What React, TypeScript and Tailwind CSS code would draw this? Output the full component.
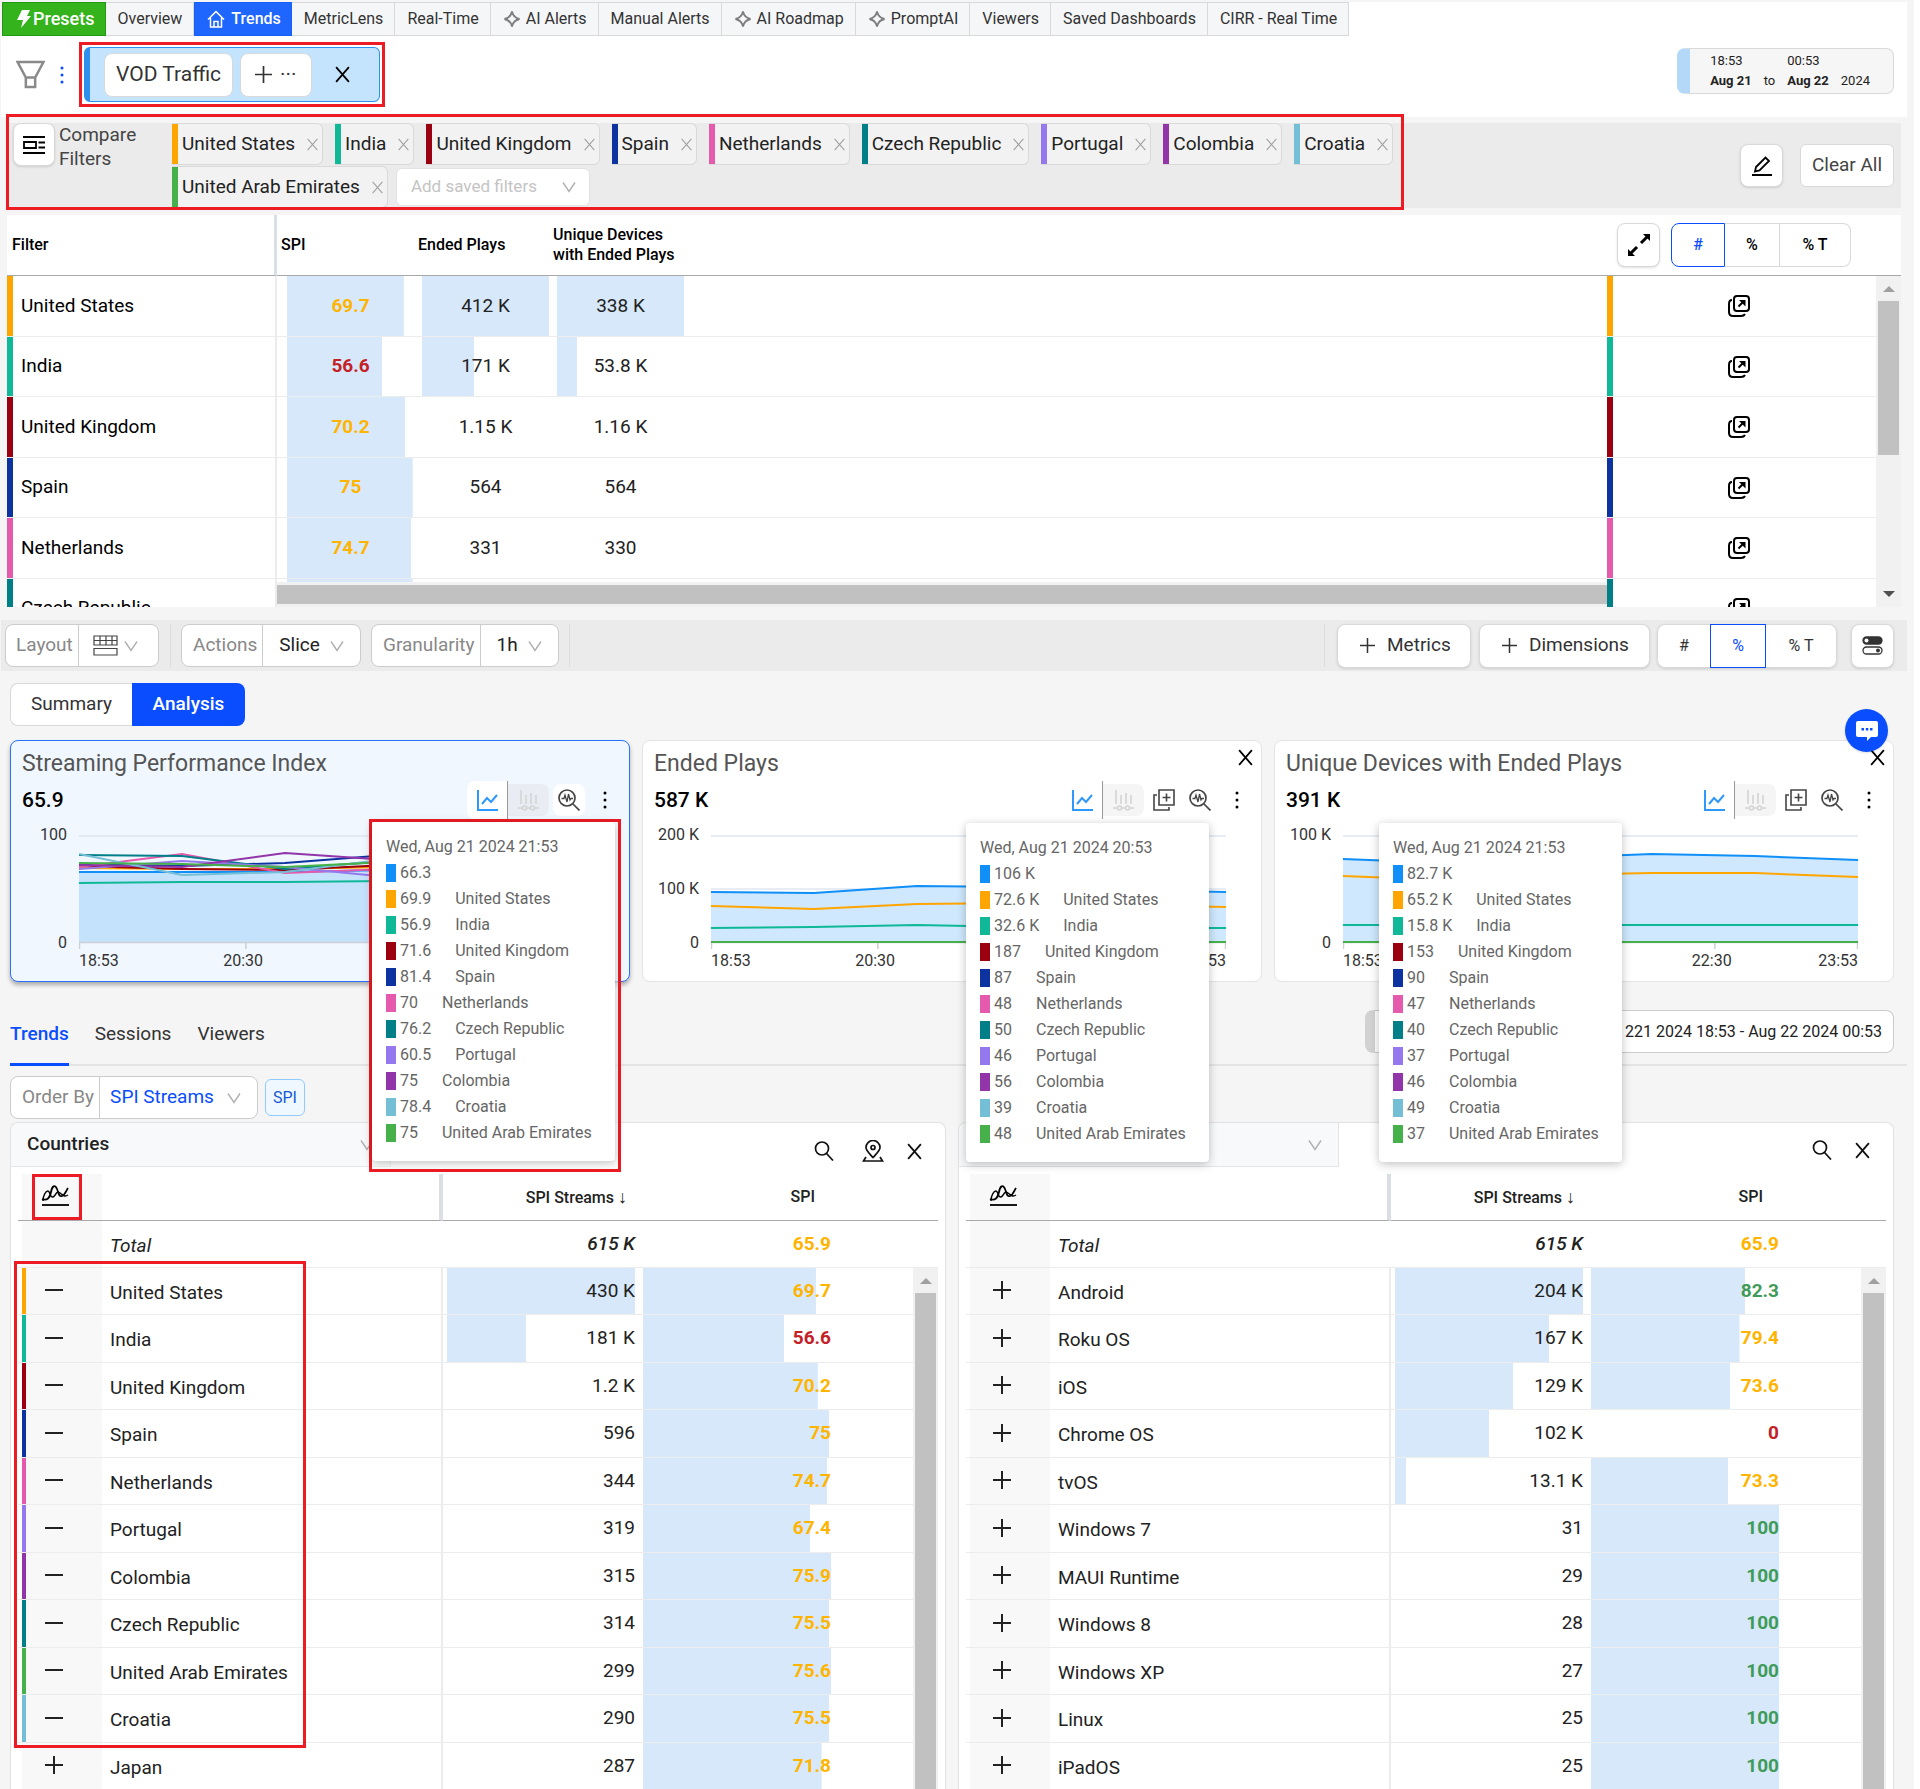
import type { ReactNode } from "react";

// =============================================================================
// Data
// =============================================================================

interface Country {
  name: string;
  bg: string;
}

const US: Country = { name: "United States", bg: "bg-[#ffa500]" };
const IN: Country = { name: "India", bg: "bg-[#0fb998]" };
const UK: Country = { name: "United Kingdom", bg: "bg-[#9a000f]" };
const ES: Country = { name: "Spain", bg: "bg-[#0d33a0]" };
const NL: Country = { name: "Netherlands", bg: "bg-[#e55aac]" };
const CZ: Country = { name: "Czech Republic", bg: "bg-[#007f88]" };
const PT: Country = { name: "Portugal", bg: "bg-[#9678ee]" };
const CO: Country = { name: "Colombia", bg: "bg-[#9135a8]" };
const HR: Country = { name: "Croatia", bg: "bg-[#74bfd6]" };
const AE: Country = { name: "United Arab Emirates", bg: "bg-[#46b04a]" };

const COUNTRIES = [US, IN, UK, ES, NL, CZ, PT, CO, HR, AE];

const YELLOW = "text-[#ffb400]";
const RED = "text-[#c42127]";
const GREEN = "text-[#3f9b57]";

interface CompareRow {
  country: Country;
  cells: { text: string; fill: number }[];
  tone: string;
}

const COMPARE_ROWS: CompareRow[] = [
  { country: US, tone: YELLOW, cells: [{ text: "69.7", fill: 92 }, { text: "412 K", fill: 100 }, { text: "338 K", fill: 100 }] },
  { country: IN, tone: RED, cells: [{ text: "56.6", fill: 75 }, { text: "171 K", fill: 41 }, { text: "53.8 K", fill: 16 }] },
  { country: UK, tone: YELLOW, cells: [{ text: "70.2", fill: 93 }, { text: "1.15 K", fill: 0 }, { text: "1.16 K", fill: 0 }] },
  { country: ES, tone: YELLOW, cells: [{ text: "75", fill: 99 }, { text: "564", fill: 0 }, { text: "564", fill: 0 }] },
  { country: NL, tone: YELLOW, cells: [{ text: "74.7", fill: 98 }, { text: "331", fill: 0 }, { text: "330", fill: 0 }] },
  { country: CZ, tone: YELLOW, cells: [{ text: "", fill: 99 }, { text: "", fill: 0 }, { text: "", fill: 0 }] },
];

interface DimensionRow {
  name: string;
  streams: string;
  spi: string;
  streamsFill: number;
  spiFill: number;
  tone: string;
  bar?: string;
}

const COUNTRY_ROWS: DimensionRow[] = [
  { name: "United States", streams: "430 K", spi: "69.7", streamsFill: 100, spiFill: 92, tone: YELLOW, bar: US.bg },
  { name: "India", streams: "181 K", spi: "56.6", streamsFill: 42, spiFill: 75, tone: RED, bar: IN.bg },
  { name: "United Kingdom", streams: "1.2 K", spi: "70.2", streamsFill: 0, spiFill: 93, tone: YELLOW, bar: UK.bg },
  { name: "Spain", streams: "596", spi: "75", streamsFill: 0, spiFill: 99, tone: YELLOW, bar: ES.bg },
  { name: "Netherlands", streams: "344", spi: "74.7", streamsFill: 0, spiFill: 98, tone: YELLOW, bar: NL.bg },
  { name: "Portugal", streams: "319", spi: "67.4", streamsFill: 0, spiFill: 89, tone: YELLOW, bar: PT.bg },
  { name: "Colombia", streams: "315", spi: "75.9", streamsFill: 0, spiFill: 100, tone: YELLOW, bar: CO.bg },
  { name: "Czech Republic", streams: "314", spi: "75.5", streamsFill: 0, spiFill: 99, tone: YELLOW, bar: CZ.bg },
  { name: "United Arab Emirates", streams: "299", spi: "75.6", streamsFill: 0, spiFill: 100, tone: YELLOW, bar: AE.bg },
  { name: "Croatia", streams: "290", spi: "75.5", streamsFill: 0, spiFill: 99, tone: YELLOW, bar: HR.bg },
  { name: "Japan", streams: "287", spi: "71.8", streamsFill: 0, spiFill: 95, tone: YELLOW },
];

const OS_ROWS: DimensionRow[] = [
  { name: "Android", streams: "204 K", spi: "82.3", streamsFill: 100, spiFill: 82, tone: GREEN },
  { name: "Roku OS", streams: "167 K", spi: "79.4", streamsFill: 82, spiFill: 79, tone: YELLOW },
  { name: "iOS", streams: "129 K", spi: "73.6", streamsFill: 63, spiFill: 74, tone: YELLOW },
  { name: "Chrome OS", streams: "102 K", spi: "0", streamsFill: 50, spiFill: 0, tone: RED },
  { name: "tvOS", streams: "13.1 K", spi: "73.3", streamsFill: 6, spiFill: 73, tone: YELLOW },
  { name: "Windows 7", streams: "31", spi: "100", streamsFill: 0, spiFill: 100, tone: GREEN },
  { name: "MAUI Runtime", streams: "29", spi: "100", streamsFill: 0, spiFill: 100, tone: GREEN },
  { name: "Windows 8", streams: "28", spi: "100", streamsFill: 0, spiFill: 100, tone: GREEN },
  { name: "Windows XP", streams: "27", spi: "100", streamsFill: 0, spiFill: 100, tone: GREEN },
  { name: "Linux", streams: "25", spi: "100", streamsFill: 0, spiFill: 100, tone: GREEN },
  { name: "iPadOS", streams: "25", spi: "100", streamsFill: 0, spiFill: 100, tone: GREEN },
];

// Six hourly samples per series, drawn on a 500 x 106 plot
interface Series {
  color: string;
  ys: number[];
}

const SPI_SERIES: Series[] = [
  { color: "#0f8ff7", ys: [36, 36, 36, 34, 35, 36] },
  { color: "#ffa500", ys: [32, 33, 33, 31, 32, 32] },
  { color: "#0fb998", ys: [47, 46, 46, 45, 46, 46] },
  { color: "#9a000f", ys: [30, 33, 34, 29, 31, 32] },
  { color: "#0d33a0", ys: [28, 30, 27, 19, 24, 26] },
  { color: "#e55aac", ys: [31, 18, 37, 33, 30, 31] },
  { color: "#007f88", ys: [19, 20, 33, 25, 28, 27] },
  { color: "#9678ee", ys: [33, 25, 31, 41, 36, 33] },
  { color: "#9135a8", ys: [29, 31, 17, 24, 26, 28] },
  { color: "#74bfd6", ys: [18, 39, 36, 23, 27, 28] },
  { color: "#46b04a", ys: [27, 28, 31, 26, 28, 29] },
];

const PLAYS_SERIES: Series[] = [
  { color: "#0f8ff7", ys: [56, 57, 50, 51, 54, 56] },
  { color: "#ffa500", ys: [70, 73, 68, 67, 69, 71] },
  { color: "#0fb998", ys: [92, 91, 89, 91, 92, 92] },
  { color: "#46b04a", ys: [106, 106, 106, 106, 106, 106] },
];

const DEVICES_SERIES: Series[] = [
  { color: "#0f8ff7", ys: [23, 27, 22, 18, 20, 24] },
  { color: "#ffa500", ys: [40, 44, 39, 37, 37, 41] },
  { color: "#0fb998", ys: [89, 89, 89, 89, 89, 89] },
  { color: "#46b04a", ys: [106, 106, 106, 106, 106, 106] },
];

// =============================================================================
// Icons
// =============================================================================

function Svg({ size, box = "0 0 24 24", width = 2, className = "", children }: { size: number; box?: string; width?: number; className?: string; children: ReactNode }) {
  return (
    <svg width={size} height={size} viewBox={box} fill="none" stroke="currentColor" strokeWidth={width} className={`shrink-0 ${className}`} aria-hidden="true">
      {children}
    </svg>
  );
}

const BoltIcon = () => (
  <svg width="14" height="18" viewBox="0 0 14 18" fill="currentColor" className="shrink-0" aria-hidden="true">
    <path d="M5 0h8l-3 6h4L4 18l2-8H0z" />
  </svg>
);

const HomeIcon = () => (
  <Svg size={18} width={1.5} box="0 0 18 18">
    <path d="M1 9.5 9 1.5l8 8M3.5 8v9h11V8M7 17v-5.5h4V17" />
  </Svg>
);

const SparkleIcon = () => (
  <Svg size={18} width={1.8} box="0 0 18 18" className="text-[#7d7d7d]">
    <path d="M9 1.500c1 4.500 3 6.500 7.500 7.500-4.500 1-6.500 3-7.500 7.500-1-4.500-3-6.500-7.500-7.500 4.500-1 6.500-3 7.500-7.500z" />
  </Svg>
);

const CloseIcon = ({ size, width = 2 }: { size: number; width?: number }) => (
  <Svg size={size} width={width} box="0 0 16 16">
    <path d="M2 1l12 14M14 1 2 15" />
  </Svg>
);

const Chevron = ({ className = "" }: { className?: string }) => (
  <Svg size={14} width={1.4} box="0 0 14 14" className={`text-[#b0b0b0] ${className}`}>
    <path d="m1 2.500 6 9 6-9" />
  </Svg>
);

const PlusIcon = ({ size = 18, width = 2 }: { size?: number; width?: number }) => (
  <Svg size={size} width={width} box="0 0 18 18">
    <path d="M9 0v18M0 9h18" />
  </Svg>
);

const MinusIcon = () => (
  <Svg size={18} width={2} box="0 0 18 18">
    <path d="M0 9h18" />
  </Svg>
);

const FunnelIcon = () => (
  <Svg size={29} width={2.4} box="0 0 28 28" className="text-[#8a8a8a]">
    <path d="M1.500 2h25L18.500 17h-9zM9.500 17h9v9h-9z" />
  </Svg>
);

const ListIcon = () => (
  <Svg size={22} width={1.8} box="0 0 22 22">
    <path d="M0 3h22M0 19h22M1 8h12v6H1zM15.500 8.500H22M15.500 13.500H22" />
  </Svg>
);

const PencilIcon = () => (
  <Svg size={20} width={1.8} box="0 0 20 20">
    <path d="m4 11 9.500-9.500 3.500 3.500-9.500 9.500-4.500 1zM0 19h20" />
  </Svg>
);

const ExpandIcon = () => (
  <Svg size={22} width={3} box="0 0 22 22">
    <path d="m13 9 6-6M9 13l-6 6" />
    <path d="M15 0h7v7zM7 22H0v-7z" fill="currentColor" stroke="none" />
  </Svg>
);

const OpenIcon = () => (
  <Svg size={22} width={2} box="0 0 22 22">
    <rect x="6" y="1" width="15" height="15" rx="3" />
    <path d="M4 5Q1 5 1 9v8q0 4 4 4h8q3 0 4-2" />
    <path d="m10.500 11.500 5-5" />
    <path d="M11 5h6.500v6.500z" fill="currentColor" stroke="none" />
  </Svg>
);

const LayoutIcon = () => (
  <svg width="25" height="21" viewBox="0 0 25 21" fill="none" stroke="#444" strokeWidth="1.200" className="shrink-0" aria-hidden="true">
    <path d="M1 1h23v9H1zM1 5.500h23M7 1v9M13 1v9M19 1v9M1 13.500h23v6.500H1z" />
  </svg>
);

const TogglesIcon = () => (
  <svg width="21" height="19" viewBox="0 0 21 19" fill="none" stroke="#333" strokeWidth="1.300" className="shrink-0" aria-hidden="true">
    <rect x="1" y="1" width="19" height="7" rx="3.500" fill="#333" />
    <circle cx="4.500" cy="4.500" r="2" fill="#fff" stroke="none" />
    <rect x="1" y="11" width="19" height="7" rx="3.500" />
    <circle cx="16" cy="14.500" r="2" fill="#333" stroke="none" />
  </svg>
);

const LineChartIcon = () => (
  <Svg size={21} width={2} box="0 0 21 21" className="text-[#2f98fb]">
    <path d="M1 0v20h20M5 14l5-6 4 4 6-7" />
  </Svg>
);

const BarChartIcon = () => (
  <Svg size={21} width={1.6} box="0 0 21 21" className="text-[#d4d4d4]">
    <path d="M3 0v14M8 5v9M13 3v11M18 5v9M0 18h5M16 18h5M8 18h5" />
    <circle cx="6.500" cy="18" r="2" />
    <circle cx="14.500" cy="18" r="2" />
  </Svg>
);

const CopyPlusIcon = () => (
  <Svg size={22} width={1.6} box="0 0 22 22">
    <path d="M6 1h15v15H6zM4 6H1v15h15v-3M13.500 4.500v8M9.500 8.500h8" />
  </Svg>
);

const PulseSearchIcon = () => (
  <Svg size={22} width={1.7} box="0 0 22 22">
    <circle cx="9" cy="9" r="8" />
    <path d="m15 15 6.500 6.500" />
    <path d="M3.500 9.500H6L7 6l2 7 1.500-8 1.500 6 1-1.500h2" strokeWidth="1.300" />
  </Svg>
);

const DotsIcon = () => (
  <svg width="4" height="20" viewBox="0 0 4 20" fill="currentColor" className="shrink-0" aria-hidden="true">
    <circle cx="2" cy="3" r="1.500" />
    <circle cx="2" cy="10" r="1.500" />
    <circle cx="2" cy="17" r="1.500" />
  </svg>
);

const SearchIcon = () => (
  <Svg size={20} width={1.7} box="0 0 20 20">
    <circle cx="8" cy="7.500" r="6.500" />
    <path d="m12.500 12.500 6.500 7" />
  </Svg>
);

const MapPinIcon = () => (
  <Svg size={22} width={1.7} box="0 0 22 22">
    <path d="M11 17.500C7 13 4 10.500 4 7.500a7 7 0 0 1 14 0c0 3-3 5.500-7 10zM4 17l-2.500 4h19L18 17" />
    <circle cx="11" cy="7.500" r="2" />
  </Svg>
);

const TrendIcon = () => (
  <svg width="28" height="22" viewBox="0 0 28 22" fill="none" stroke="currentColor" strokeWidth="1.800" className="shrink-0" aria-hidden="true">
    <path d="M1 15c5 2 8-1 9-7s4-8 6-3 2 8 5 7 4-5 6-8" />
    <path d="M2 17c0-6 3-10 5-10s2 7 5 6 3-7 7-4 5 4 8 2" strokeWidth="1.500" />
    <path d="M1 21h27" />
  </svg>
);

// =============================================================================
// Top navigation
// =============================================================================

function TopTabs() {
  const tab = "flex items-center gap-[5px] border-y border-r border-[#d9d9d9] bg-[#f5f6f8] pl-3 pr-[11px] text-[#333]";
  return (
    <nav className="flex h-[34px] pl-px text-base">
      <a href="#presets" className="flex items-center gap-0.5 border border-[#1f9a15] bg-[#35b31c] pl-3.5 pr-2.5 text-lg font-medium text-white">
        <BoltIcon />
        Presets
      </a>
      <a href="#overview" className={tab}>Overview</a>
      <a href="#trends" className="flex items-center gap-1.5 border border-[#1560f5] bg-[#1f66ff] pl-3 pr-2.5 font-medium text-white">
        <HomeIcon />
        Trends
      </a>
      <a href="#metriclens" className={tab}>MetricLens</a>
      <a href="#realtime" className={tab}>Real-Time</a>
      <a href="#ai-alerts" className={tab}><SparkleIcon />AI Alerts</a>
      <a href="#manual-alerts" className={tab}>Manual Alerts</a>
      <a href="#ai-roadmap" className={tab}><SparkleIcon />AI Roadmap</a>
      <a href="#prompt-ai" className={tab}><SparkleIcon />PromptAI</a>
      <a href="#viewers" className={tab}>Viewers</a>
      <a href="#saved" className={tab}>Saved Dashboards</a>
      <a href="#cirr" className={tab}>CIRR - Real Time</a>
    </nav>
  );
}

function FilterBar() {
  return (
    <div className="flex items-start justify-between pb-2.5 pl-[15px] pr-[13px] pt-1.5">
      <div className="flex items-center">
        <button aria-label="Filters"><FunnelIcon /></button>
        <button aria-label="Filter options" className="mx-[15px] text-[#0a4dff]"><DotsIcon /></button>
        <div className="border-[3px] border-[#ed1c24] p-0.5">
          <div className="flex h-[55px] items-center rounded-md border border-l-[6px] border-[#2f8fee] bg-[#c4e3fd] pl-3.5">
            <button className="h-11 rounded-lg border border-[#d9d9d9] bg-white px-[11px] text-[21px] text-[#333]">VOD Traffic</button>
            <button aria-label="Add filter" className="ml-[7px] flex h-11 items-center gap-2 rounded-lg border border-[#d9d9d9] bg-white px-3.5 text-[21px] text-[#333]">
              <PlusIcon size={17} width={1.8} />
              <span>···</span>
            </button>
            <button aria-label="Remove VOD Traffic" className="pl-[22px] pr-7"><CloseIcon size={17} width={1.7} /></button>
          </div>
        </div>
      </div>
      <button className="mt-1.5 flex h-[46px] items-center rounded-lg border border-l-[13px] border-[#d9d9d9] border-l-[#b3d8f8] bg-[#f6f6f6] pl-5 pr-[23px] text-left text-[13px] leading-5 text-[#222]">
        <span className="mr-3">18:53<br /><b>Aug 21</b></span>
        <span className="mr-3"><br />to</span>
        <span className="mr-3">00:53<br /><b>Aug 22</b></span>
        <span><br />2024</span>
      </button>
    </div>
  );
}

function CompareFilters() {
  return (
    <section className="relative ml-1.5 mr-[13px] mt-1.5 flex items-start bg-[#ebebeb] text-[19px]">
      <button aria-label="Compare" className="ml-[7px] flex h-[43px] w-[42px] shrink-0 items-center justify-center rounded-lg border border-[#d9d9d9] bg-white shadow-sm"><ListIcon /></button>
      <p className="ml-1 w-[110px] shrink-0 leading-6 text-[#444]">Compare Filters</p>
      <div className="flex max-w-[1230px] flex-1 flex-wrap gap-x-3 gap-y-px pl-[3px]">
        {COUNTRIES.map((c) => (
          <span key={c.name} className="flex h-[42px] items-stretch overflow-hidden rounded-r-md border border-l-0 border-[#d9d9d9] bg-[#f2f2f2] text-[#222]">
            <span className={`w-1.5 ${c.bg}`} />
            <span className="flex items-center pl-1">{c.name}</span>
            <button aria-label={`Remove ${c.name}`} className="ml-[11px] mr-[3px] text-[#a0a0a0]"><CloseIcon size={13} width={1.3} /></button>
          </span>
        ))}
        <label className="relative -ml-1 mt-0.5 block">
          <select aria-label="Add saved filters" className="h-[38px] w-[194px] appearance-none rounded-md border border-[#e2e2e2] bg-white px-3.5 text-[17px] text-[#c4c4c4]">
            <option>Add saved filters</option>
          </select>
          <Chevron className="pointer-events-none absolute right-3.5 top-3" />
        </label>
      </div>
      <div className="ml-auto mr-[7px] mt-[21px] flex items-center gap-[17px]">
        <button aria-label="Edit" className="flex h-[43px] w-[43px] items-center justify-center rounded-lg border border-[#d9d9d9] bg-white shadow-sm"><PencilIcon /></button>
        <button className="h-[43px] w-[94px] rounded-md border border-[#d9d9d9] bg-white text-[#444]">Clear All</button>
      </div>
      <div className="pointer-events-none absolute -top-[9px] left-0 -bottom-[2px] w-[1398px] border-[3px] border-[#ed1c24]" />
    </section>
  );
}

// =============================================================================
// Compare table
// =============================================================================

function CompareTable() {
  const seg = "h-11 border-y border-r border-[#d9d9d9] bg-white text-center font-medium";
  return (
    <section className="relative ml-[7px] mr-[13px] mt-[7px] h-[392px] overflow-hidden bg-white">
      <table className="w-full table-fixed border-separate border-spacing-0 text-black">
        <colgroup>
          <col className="w-[270px]" />
          <col className="w-[141px]" />
          <col className="w-[135px]" />
          <col className="w-[135px]" />
          <col />
          <col className="w-[294px]" />
        </colgroup>
        <thead>
          <tr className="text-left text-base leading-5 [&>th]:h-[61px] [&>th]:border-b [&>th]:border-[#a9a9a9] [&>th]:font-medium">
            <th className="border-r-[3px] !border-r-[#d9dfe5] pl-[5px]">Filter</th>
            <th className="pl-1">SPI</th>
            <th>Ended Plays</th>
            <th className="whitespace-nowrap">Unique Devices<br />with Ended Plays</th>
            <th />
            <th>
              <div className="flex items-center pl-2.5">
                <button aria-label="Expand" className="mr-[11px] flex h-11 w-[43px] items-center justify-center rounded-lg border border-[#d9d9d9] bg-white shadow-sm"><ExpandIcon /></button>
                <button className="h-11 w-[54px] rounded-l-lg border border-[#0a4dff] text-center font-medium text-[#0a4dff]">#</button>
                <button className={`${seg} w-[55px]`}>%</button>
                <button className={`${seg} w-[71px] rounded-r-lg`}>% T</button>
              </div>
            </th>
          </tr>
        </thead>
        <tbody className="text-[19px]">
          {COMPARE_ROWS.map((row) => (
            <tr key={row.country.name} className="group [&>td]:border-b [&>td]:border-[#ececec]">
              <td className="border-r-2 p-0">
                <div className="flex h-[60px] items-center gap-2 group-even:h-[59px]">
                  <span className={`h-full w-1.5 ${row.country.bg}`} />
                  {row.country.name}
                </div>
              </td>
              {row.cells.map((cell, i) => (
                <td
                  key={i}
                  className={`bg-[linear-gradient(#d6e8fa,#d6e8fa)] bg-origin-content bg-no-repeat py-0 pr-1 text-center ${i === 0 ? `pl-2.5 font-bold ${row.tone}` : "pl-1 text-[#222]"}`}
                  style={{ backgroundSize: `${cell.fill}% 100%` }}
                >
                  {cell.text}
                </td>
              ))}
              <td />
              <td className="p-0">
                <div className="flex h-[60px] items-center pr-[37px] group-even:h-[59px]">
                  <span className={`h-full w-1.5 ${row.country.bg}`} />
                  <button aria-label={`Open ${row.country.name}`} className="mx-auto"><OpenIcon /></button>
                </div>
              </td>
            </tr>
          ))}
        </tbody>
      </table>
      {/* Scrollbars */}
      <div className="absolute bottom-0 left-[270px] right-[294px] h-[25px] border-y-[3px] border-[#f1f1f1] bg-[#c1c1c1]" />
      <div className="absolute bottom-0 right-0 top-[61px] flex w-[25px] flex-col items-center bg-[#f1f1f1]">
        <span className="mt-2.5 border-x-[6px] border-b-[6px] border-x-transparent border-b-[#a0a0a0]" />
        <span className="mt-[9px] h-[154px] w-[21px] bg-[#c1c1c1]" />
        <span className="mb-2.5 mt-auto border-x-[6px] border-t-[6px] border-x-transparent border-t-[#505050]" />
      </div>
    </section>
  );
}

// =============================================================================
// Toolbar
// =============================================================================

function LabeledSelect({ label, value, className, valueClass = "" }: { label: string; value: string; className: string; valueClass?: string }) {
  return (
    <label className={`flex h-[43px] items-stretch rounded-lg border border-[#ccc] bg-white text-[19px] ${className}`}>
      <span className="flex shrink-0 items-center whitespace-nowrap border-r border-[#ccc] pl-[11px] pr-[5px] text-[#888]">{label}</span>
      <span className="relative flex flex-1 items-center">
        <select className={`w-full appearance-none bg-transparent ${valueClass}`}>
          <option>{value}</option>
        </select>
        <Chevron className="pointer-events-none absolute right-4" />
      </span>
    </label>
  );
}

function Toolbar() {
  const button = "flex h-11 items-center rounded-lg border border-[#d9d9d9] bg-white shadow-sm";
  return (
    <section className="ml-px mr-[7px] mt-[13px] flex h-[51px] items-center bg-[#ebebeb] pl-1 pr-[13px] text-[19px] text-[#333]">
      <div className="flex h-[43px] w-[154px] items-stretch rounded-lg border border-[#ccc] bg-white">
        <span className="flex items-center border-r border-[#ccc] pl-2.5 pr-[5px] text-[#888]">Layout</span>
        <button aria-label="Choose layout" className="flex flex-1 items-center gap-1.5 pl-3.5"><LayoutIcon /><Chevron /></button>
      </div>
      <span className="ml-[11px] mr-2.5 h-[43px] w-px bg-[#ddd]" />
      <LabeledSelect label="Actions" value="Slice" className="mr-2.5 w-[180px]" valueClass="pl-4 text-[#222]" />
      <LabeledSelect label="Granularity" value="1h" className="w-[188px]" valueClass="pl-4 text-[#222]" />
      <span className="ml-2.5 h-[43px] w-px bg-[#ddd]" />
      <span className="ml-auto mr-3 h-[43px] w-px bg-[#ddd]" />
      <button className={`${button} w-[134px] gap-3 pl-[22px]`}><PlusIcon size={15} width={1.8} />Metrics</button>
      <button className={`${button} ml-2 w-[171px] gap-3 pl-[22px]`}><PlusIcon size={15} width={1.8} />Dimensions</button>
      <div className="ml-[7px] flex rounded-lg text-base shadow-sm">
        <button className="h-11 w-[53px] rounded-l-lg border border-r-0 border-[#d9d9d9] bg-white">#</button>
        <button className="h-11 w-14 border border-[#0a4dff] bg-white text-[#0a4dff]">%</button>
        <button className="h-11 w-[71px] rounded-r-lg border border-l-0 border-[#d9d9d9] bg-white">% T</button>
      </div>
      <button aria-label="Toggles" className={`${button} ml-3.5 w-[43px] justify-center`}><TogglesIcon /></button>
    </section>
  );
}

// =============================================================================
// Metric cards
// =============================================================================

interface TooltipProps {
  time: string;
  values: string[];
  className: string;
}

function ChartTooltip({ time, values, className }: TooltipProps) {
  return (
    <div className={`absolute z-10 w-[243px] rounded bg-white px-3.5 pb-[15px] pt-3 text-base leading-[26px] text-[#666] shadow-[0_2px_10px_rgba(0,0,0,0.25)] ${className}`}>
      <p className="whitespace-nowrap">{time}</p>
      <ul>
        {values.map((value, i) => (
          <li key={i} className="flex items-center whitespace-nowrap">
            <span className={`mr-1 h-[18px] w-2.5 ${i === 0 ? "bg-[#0f8ff7]" : COUNTRIES[i - 1].bg}`} />
            {value}
            {i > 0 && <span className="ml-6">{COUNTRIES[i - 1].name}</span>}
          </li>
        ))}
      </ul>
    </div>
  );
}

function Plot({ series, fill, middle }: { series: Series[]; fill: string; middle: boolean }) {
  const points = (ys: number[]) => ys.map((y, i) => `${i * 100},${y + 1}`).join(" ");
  return (
    <svg viewBox="0 0 500 116" preserveAspectRatio="none" className="block h-[116px] w-full" aria-hidden="true">
      <path d={middle ? "M0 1H500M0 54H500" : "M0 1H500"} stroke="#dfe6f2" strokeWidth="1.500" vectorEffect="non-scaling-stroke" />
      <polygon points={`0,107 ${points(series[0].ys)} 500,107`} fill={fill} />
      <path d="M0 107.500H500M.5 107v7M162 107v7M361 107v7M499.500 107v7" stroke="#ccd0d6" strokeWidth="1.500" fill="none" vectorEffect="non-scaling-stroke" />
      {series.map((s) => (
        <polyline key={s.color} points={points(s.ys)} fill="none" stroke={s.color} strokeWidth="2" vectorEffect="non-scaling-stroke" />
      ))}
    </svg>
  );
}

interface MetricCardProps {
  title: string;
  value: string;
  yLabels: string[];
  series: Series[];
  selected?: boolean;
  children: ReactNode;
}

function MetricCard({ title, value, yLabels, series, selected = false, children }: MetricCardProps) {
  return (
    <article className={`relative h-[242px] rounded-lg border ${selected ? "border-[#2871ff] bg-[#f0f7ff] shadow-[0_3px_4px_rgba(0,0,0,0.3)]" : "border-[#e4e4e4] bg-white"}`}>
      <div className="flex items-center justify-between pl-[11px] pr-[7px]">
        <h2 className="pt-1.5 text-[23px] leading-[34px] text-[#555]">{title}</h2>
        {!selected && <button aria-label={`Close ${title}`} className="-mt-2"><CloseIcon size={17} width={1.7} /></button>}
      </div>
      <div className="flex items-center justify-between pl-[11px] pr-[22px]">
        <span className="pt-0.5 text-[21px] font-medium text-black">{value}</span>
        <div className="flex items-center text-[#444]">
          <button aria-label="Line chart" className={`flex h-[38px] w-[41px] items-center justify-center rounded-l-lg border-r border-[#999] ${selected ? "bg-white" : ""}`}><LineChartIcon /></button>
          <button aria-label="Bar chart" className={`flex h-8 w-[41px] items-center justify-center rounded-r-lg ${selected ? "bg-[#e9edf3]" : "bg-[#f5f5f5]"}`}><BarChartIcon /></button>
          {!selected && <button aria-label="Duplicate" className="pl-[9px]"><CopyPlusIcon /></button>}
          <button aria-label="Inspect" className={`flex h-8 items-center rounded-lg ${selected ? "ml-1 bg-white px-[5px]" : "ml-3.5"}`}><PulseSearchIcon /></button>
          <button aria-label="More" className={selected ? "ml-[18px] text-black" : "ml-6 text-black"}><DotsIcon /></button>
        </div>
      </div>
      <div className="mt-4 flex pr-[35px]">
        <div className="flex h-[108px] w-[68px] shrink-0 flex-col justify-between pr-3 text-right text-base text-[#333]">
          {yLabels.map((label) => (
            <span key={label} className="-my-2 leading-4">{label}</span>
          ))}
        </div>
        <div className="flex-1">
          <Plot series={series} fill={selected ? "#c5e2fd" : "#cfe8fd"} middle={yLabels.length === 3} />
          <div className="flex text-base leading-5 text-[#333]">
            <span className="w-[28%]">18:53</span>
            <span>20:30</span>
            <span className="ml-[32%] flex-1">22:30</span>
            <span>23:53</span>
          </div>
        </div>
      </div>
      {children}
    </article>
  );
}

function MetricCards() {
  return (
    <section className="relative ml-2.5 mr-5 mt-3.5 grid grid-cols-3 gap-3">
      <MetricCard selected title="Streaming Performance Index" value="65.9" yLabels={["100", "0"]} series={SPI_SERIES}>
        <div className="absolute left-[358px] top-[78px] z-10 h-[353px] w-[252px] border-[3px] border-[#ed1c24] bg-white/60">
          <ChartTooltip
            time="Wed, Aug 21 2024 21:53"
            values={["66.3", "69.9", "56.9", "71.6", "81.4", "70", "76.2", "60.5", "75", "78.4", "75"]}
            className="left-0 top-0"
          />
        </div>
      </MetricCard>
      <MetricCard title="Ended Plays" value="587 K" yLabels={["200 K", "100 K", "0"]} series={PLAYS_SERIES}>
        <ChartTooltip
          time="Wed, Aug 21 2024 20:53"
          values={["106 K", "72.6 K", "32.6 K", "187", "87", "48", "50", "46", "56", "39", "48"]}
          className="left-[323px] top-[82px]"
        />
      </MetricCard>
      <MetricCard title="Unique Devices with Ended Plays" value="391 K" yLabels={["100 K", "0"]} series={DEVICES_SERIES}>
        <ChartTooltip
          time="Wed, Aug 21 2024 21:53"
          values={["82.7 K", "65.2 K", "15.8 K", "153", "90", "47", "40", "37", "46", "49", "37"]}
          className="left-[104px] top-[82px]"
        />
      </MetricCard>
      <button aria-label="Chat" className="absolute -top-[31px] right-[6px] z-20 flex h-[43px] w-[43px] items-center justify-center rounded-full bg-[#0a4dff] shadow">
        <svg width="22" height="20" viewBox="0 0 22 20" fill="white" aria-hidden="true">
          <path d="M2 0h18q2 0 2 2v12q0 2-2 2h-5l-4 4v-4H2q-2 0-2-2V2q0-2 2-2z" />
          <path d="M5.500 7h2.500v2.500H5.500zM9.800 7h2.500v2.500H9.800zM14 7h2.500v2.500H14z" fill="#0a4dff" />
        </svg>
      </button>
    </section>
  );
}

// =============================================================================
// Dimension panels
// =============================================================================

function DimensionPanel({ title, rows, highlighted = false }: { title: string; rows: DimensionRow[]; highlighted?: boolean }) {
  return (
    <section className="rounded-t-lg border border-b-0 border-[#e2e2e2] bg-white">
      <div className="flex h-[51px] items-start justify-between">
        <label className="relative flex h-11 w-[380px] items-center rounded-tl-lg border-b border-r border-[#e2e4e8] bg-[#f8f9fb]">
          <select aria-label="Dimension" className="w-full appearance-none bg-transparent pl-4 text-[19px] font-medium text-[#222]">
            <option>{title}</option>
          </select>
          <Chevron className="pointer-events-none absolute right-4" />
        </label>
        <div className="flex items-center gap-[22px] pr-[22px] pt-[17px] text-[#111]">
          <button aria-label="Search"><SearchIcon /></button>
          {highlighted && <button aria-label="Map" className="ml-1.5"><MapPinIcon /></button>}
          <button aria-label="Close panel"><CloseIcon size={17} width={1.7} /></button>
        </div>
      </div>
      <div className="relative mx-[7px]">
        <table className="w-full table-fixed border-separate border-spacing-0 text-[#222]">
          <colgroup>
            <col className="w-[84px]" />
            <col />
            <col className="w-[196px]" />
            <col className="w-[196px]" />
            <col className="w-[103px]" />
          </colgroup>
          <thead>
            <tr className="text-base [&>th]:h-[47px] [&>th]:border-b [&>th]:border-[#a9a9a9] [&>th]:font-medium">
              <th className="p-0 pl-1">
                <div className="flex h-[46px] items-center bg-[#f8f8f8] pl-2.5">
                  <button aria-label="Plot rows" className={`flex h-[46px] w-[50px] items-center justify-center pb-1 pr-1 text-black ${highlighted ? "border-[3px] border-[#ed1c24]" : ""}`}><TrendIcon /></button>
                </div>
              </th>
              <th className="border-r-4 !border-r-[#d9dfe5]" />
              <th className="pr-3 text-right">SPI Streams <span className="text-lg font-normal">↓</span></th>
              <th className="pr-5 text-right">SPI</th>
              <th />
            </tr>
          </thead>
          <tbody className="text-[19px]">
            <tr className="italic [&>td]:h-[47px] [&>td]:border-b [&>td]:border-[#ececec]">
              <td className="p-0 pl-1"><div className="h-[46px] bg-[#f8f8f8]" /></td>
              <td className="pl-2 pt-1">Total</td>
              <td className="pr-1 text-right font-medium">615 K</td>
              <td className={`pr-1 text-right font-bold not-italic ${YELLOW}`}>65.9</td>
              <td />
            </tr>
            {rows.map((row) => (
              <tr key={row.name} className="group [&>td]:border-b [&>td]:border-[#ececec]">
                <td className="h-[47px] p-0 pl-1 group-odd:h-12">
                  <div className="flex h-[46px] items-center bg-[#f8f8f8] group-odd:h-[47px]">
                    <span className={`h-full w-1 ${row.bar ?? ""}`} />
                    <button aria-label={`Toggle ${row.name}`} className="ml-[19px] pb-0.5">{row.bar ? <MinusIcon /> : <PlusIcon />}</button>
                  </div>
                </td>
                <td className="border-r-2 pl-2 pt-1">{row.name}</td>
                <td className="bg-[linear-gradient(#d6e8fa,#d6e8fa)] bg-origin-content bg-no-repeat px-1 py-0 text-right" style={{ backgroundSize: `${row.streamsFill}% 100%` }}>
                  {row.streams}
                </td>
                <td className={`bg-[linear-gradient(#d6e8fa,#d6e8fa)] bg-origin-content bg-no-repeat px-1 py-0 text-right font-bold ${row.tone}`} style={{ backgroundSize: `${row.spiFill}% 100%` }}>
                  {row.spi}
                </td>
                <td />
              </tr>
            ))}
          </tbody>
        </table>
        {highlighted && <div className="pointer-events-none absolute -left-[4px] top-[87px] h-[487px] w-[292px] border-[3px] border-[#ed1c24]" />}
        <div className="absolute bottom-0 right-0 top-[94px] flex w-[25px] flex-col items-center bg-[#f1f1f1]">
          <span className="mt-2.5 border-x-[6px] border-b-[6px] border-x-transparent border-b-[#a0a0a0]" />
          <span className="mt-[9px] w-[21px] flex-1 bg-[#c1c1c1]" />
        </div>
      </div>
    </section>
  );
}

export default function App() {
  return (
    <div className="bg-white pr-1.5 font-[Roboto,'Liberation_Sans',sans-serif] [&_button]:cursor-pointer">
      <div className="bg-[#f5f5f5] pt-0.5">
        <header className="ml-px mr-[7px] bg-white">
          <TopTabs />
          <FilterBar />
        </header>
        <CompareFilters />
        <CompareTable />
        <Toolbar />

        <div className="ml-2.5 mt-3 flex text-[19px]">
          <button className="h-[43px] w-[122px] rounded-l-lg border border-r-0 border-[#d9d9d9] bg-white text-[#333]">Summary</button>
          <button className="h-[43px] w-[113px] rounded-r-lg bg-[#0a4dff] font-medium text-white">Analysis</button>
        </div>

        <MetricCards />

        <div className="ml-2.5 mr-[7px] flex h-[84px] items-end justify-between border-b-2 border-[#e4e4e4] pr-[13px]">
          <nav className="-mb-0.5 flex gap-[26px] text-[19px] text-[#333]">
            <a href="#trends-tab" className="h-[46px] border-b-[3px] border-[#0a4dff] font-medium text-[#0a4dff]">Trends</a>
            <a href="#sessions-tab">Sessions</a>
            <a href="#viewers-tab">Viewers</a>
          </nav>
          <button className="mb-[11px] h-[43px] w-[529px] rounded-lg border border-l-[10px] border-[#ccc] border-l-[#d2d2d2] bg-white pr-[11px] text-right text-base text-[#222]">
            221 2024 18:53 - Aug 22 2024 00:53
          </button>
        </div>

        <div className="mb-[3px] ml-2.5 mt-2.5 flex items-center gap-[7px]">
          <LabeledSelect label="Order By" value="SPI Streams" className="w-[248px]" valueClass="pl-2.5 text-[#0a4dff]" />
          <button className="h-[37px] rounded-md border border-[#91caff] bg-[#f0f8ff] px-[7px] text-base text-[#1558d6]">SPI</button>
        </div>

        <div className="ml-2.5 mr-5 grid grid-cols-2 gap-3">
          <DimensionPanel title="Countries" rows={COUNTRY_ROWS} highlighted />
          <DimensionPanel title="Device OS" rows={OS_ROWS} />
        </div>
      </div>
    </div>
  );
}
